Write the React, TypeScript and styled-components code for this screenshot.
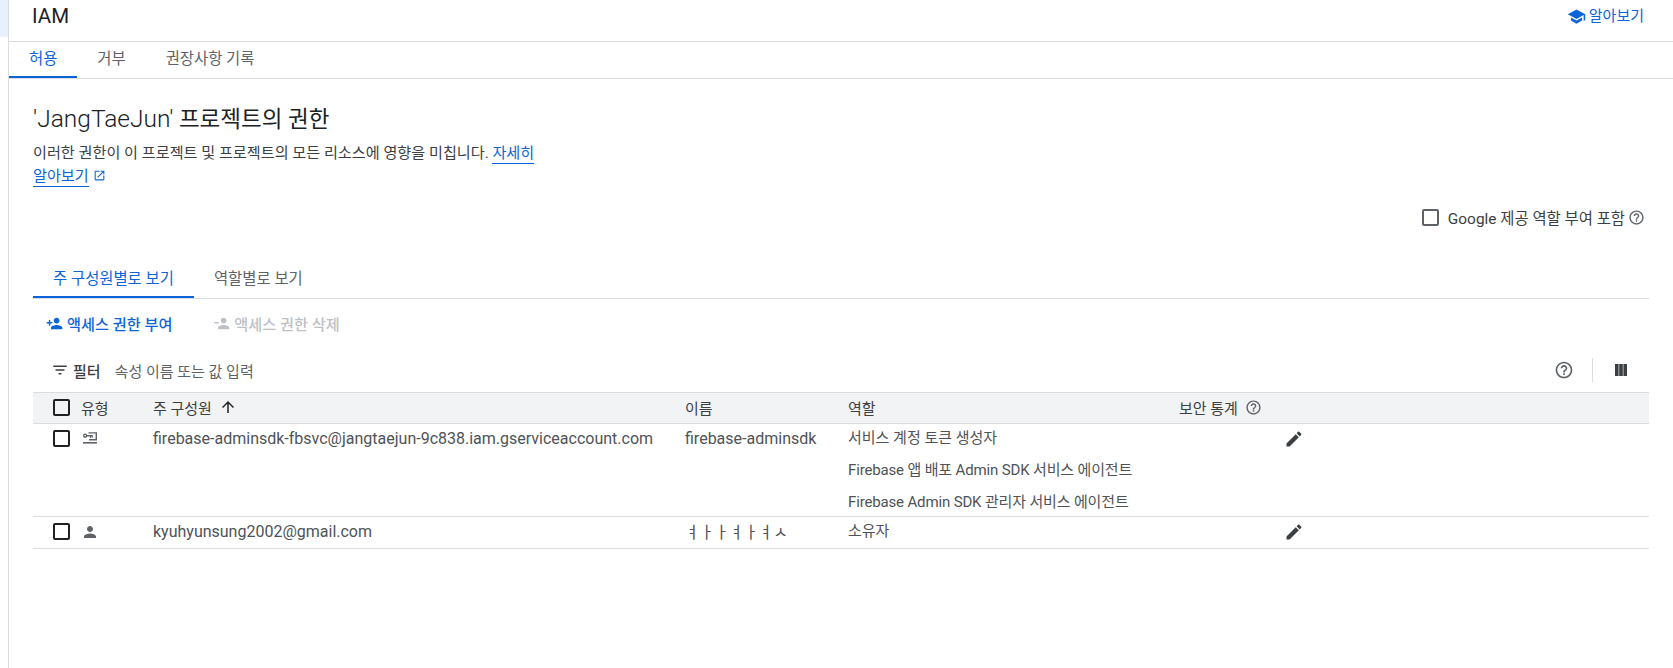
import React from "react";
import styled, { createGlobalStyle } from "styled-components";

const Global = createGlobalStyle`
  html, body { margin: 0; padding: 0; background: #fff; }
  body { font-family: Roboto, "Noto Sans CJK KR", sans-serif; color: #3c4043; font-size: 15px; }
  #root { height: 668px; overflow: hidden; }
`;

const Page = styled.div`display: flex; height: 668px;`;
const Rail = styled.div`width: 8px; flex: none; border-right: 1px solid #dadce0;`;
const RailMark = styled.div`height: 37px; background: #e8f0fe;`;
const Main = styled.main`flex: 1; min-width: 0; display: flex; flex-direction: column;`;

const Header = styled.header`
  height: 42px; box-sizing: border-box; border-bottom: 1px solid #dadce0;
  display: flex; align-items: flex-start; justify-content: space-between;
  padding: 0 29px 0 23px;
`;
const PageTitle = styled.h1`margin: 0; font-size: 20.5px; font-weight: 400; line-height: 33px; color: #202124;`;
const LearnLink = styled.a`
  display: flex; align-items: center; gap: 3px; color: #0b65d8; font-size: 15px; line-height: 32px; height: 32px;
`;

const Tabs = styled.nav`display: flex; height: 37px; box-sizing: border-box; border-bottom: 1px solid #dadce0;`;
const Tab = styled.div<{ $active?: boolean }>`
  height: 36px; box-sizing: border-box; padding: 0 20px; display: flex; align-items: center;
  font-size: 15.4px; line-height: 28px;
  color: ${p => (p.$active ? "#0b65d8" : "#5f6368")};
  border-bottom: 2px solid ${p => (p.$active ? "#0b65d8" : "transparent")};
`;

const Content = styled.div`padding: 0 24px; display: flex; flex-direction: column;`;
const Title = styled.h2`margin: 24px 0 0; font-size: 22.5px; line-height: 32px; font-weight: 400; color: #202124; white-space: nowrap;`;
const TitleName = styled.span`font-size: 24.5px; font-weight: 300;`;
const Desc = styled.p`margin: 7px 0 0; width: 505px; font-size: 15.15px; line-height: 23px; color: #3c4043; word-break: keep-all;`;
const DocLink = styled.a`color: #0b65d8; border-bottom: 1px solid #0b65d8; padding-bottom: 1px;`;
const ExtIcon = styled.svg`width: 13px; height: 13px; margin-left: 4px; vertical-align: -1px; fill: #0b65d8;`;

const IncludeRow = styled.div`
  display: flex; justify-content: flex-end; align-items: center; gap: 9px; margin-top: 17px; height: 24px; padding-right: 4px;
`;
const IncludeLabel = styled.span`display: flex; align-items: center; gap: 3px; color: #3c4043; font-size: 15.4px;`;
const Check = styled.span<{ $dark?: boolean }>`
  display: block; width: 17px; height: 17px; box-sizing: border-box; border-radius: 2px; flex: none;
  border: 2px solid ${p => (p.$dark ? "#202124" : "#5f6368")};
`;

const ViewTabs = styled.div`display: flex; margin-top: 33px; height: 37px; box-sizing: border-box; border-bottom: 1px solid #dadce0;`;

const ActionBar = styled.div`display: flex; align-items: center; height: 52px; box-sizing: border-box; padding: 0 0 4px 13px; gap: 41px;`;
const Action = styled.span<{ $off?: boolean }>`
  display: flex; align-items: center; gap: 4px; font-size: 15.2px; font-weight: 500;
  color: ${p => (p.$off ? "#bdc1c6" : "#0b65d8")};
`;

const FilterBar = styled.div`display: flex; align-items: center; height: 41px; box-sizing: border-box; padding: 0 0 3px 18px;`;
const FilterLabel = styled.span`display: flex; align-items: center; gap: 4px; font-weight: 500; color: #3c4043; font-size: 15px;`;
const FilterHint = styled.span`margin-left: 14px; color: #5f6368; font-size: 15px; flex: 1;`;
const FilterTools = styled.div`display: flex; align-items: center; padding-right: 22px;`;
const Divider = styled.span`width: 1px; height: 24px; background: #dadce0; margin: 0 22px 0 18px;`;

const Table = styled.div`display: flex; flex-direction: column; color: #4f5358; font-size: 15px;`;
const Row = styled.div<{ $head?: boolean }>`
  display: grid; grid-template-columns: 48px 72px 532px 163px 331px 1fr; box-sizing: border-box;
  min-height: 32px; align-items: start;
  border-bottom: 1px solid #dadce0;
  ${p => p.$head && "background: #f1f3f4; border-top: 1px solid #dadce0; color: #3c4043;"}
`;
const CheckCell = styled.div`padding-left: 20px; display: flex; align-items: center; height: 28px;`;
const TypeCell = styled.div`display: flex; align-items: center; height: 30px;`;
const Cell = styled.div`display: flex; align-items: center; gap: 7px; height: 28px; white-space: nowrap;`;
const DataCell = styled(Cell)`font-size: 16px;`;
const RoleList = styled.div`display: flex; flex-direction: column; gap: 4px;`;
const Role = styled.div<{ $tight?: boolean }>`
  line-height: 28px; height: 28px; white-space: nowrap;
  letter-spacing: ${p => (p.$tight ? "-0.15px" : "0")};
`;
const EditCell = styled.div`display: flex; align-items: center; height: 30px; padding-left: 105px;`;
const KeyIcon = styled.svg`display: block; width: 14px; height: 12px; margin-left: 2px; margin-top: -2px;`;
const ColumnsIcon = styled.svg`display: block; width: 12px; height: 12px; fill: #3c4043;`;

const P = {
  school: "M5 13.18v4L12 21l7-3.82v-4L12 17l-7-3.82zM12 3L1 9l11 6 9-4.91V17h2V9L12 3z",
  help: "M11 18h2v-2h-2v2zm1-16C6.48 2 2 6.48 2 12s4.48 10 10 10 10-4.48 10-10S17.52 2 12 2zm0 18c-4.41 0-8-3.59-8-8s3.59-8 8-8 8 3.59 8 8-3.59 8-8 8zm0-14c-2.21 0-4 1.79-4 4h2c0-1.1.9-2 2-2s2 .9 2 2c0 2-3 1.75-3 5h2c0-2.25 3-2.5 3-5 0-2.21-1.79-4-4-4z",
  ext: "M19 19H5V5h7V3H5c-1.11 0-2 .9-2 2v14c0 1.1.89 2 2 2h14c1.1 0 2-.9 2-2v-7h-2v7zM14 3v2h3.59l-9.83 9.83 1.41 1.41L19 6.41V10h2V3h-7z",
  add: "M15 12c2.21 0 4-1.79 4-4s-1.79-4-4-4-4 1.79-4 4 1.79 4 4 4zm-9-2V7H4v3H1v2h3v3h2v-3h3v-2H6zm9 4c-2.67 0-8 1.34-8 4v2h16v-2c0-2.66-5.33-4-8-4z",
  remove: "M15 12c2.21 0 4-1.79 4-4s-1.79-4-4-4-4 1.79-4 4 1.79 4 4 4zM2 10v2h6v-2H2zm13 4c-2.67 0-8 1.34-8 4v2h16v-2c0-2.66-5.33-4-8-4z",
  filter: "M10 18h4v-2h-4v2zM3 6v2h18V6H3zm3 7h12v-2H6v2z",
  up: "M4 12l1.41 1.41L11 7.83V20h2V7.83l5.58 5.59L20 12l-8-8-8 8z",
  person: "M12 12c2.21 0 4-1.79 4-4s-1.79-4-4-4-4 1.79-4 4 1.79 4 4 4zm0 2c-2.67 0-8 1.34-8 4v2h16v-2c0-2.66-5.33-4-8-4z",
  edit: "M3 17.25V21h3.75L17.81 9.94l-3.75-3.75L3 17.25zM20.71 7.04c.39-.39.39-1.02 0-1.41l-2.34-2.34c-.39-.39-1.02-.39-1.41 0l-1.83 1.83 3.75 3.75 1.83-1.83z",
};

const Icon = ({ d, size, color }: { d: string; size: number; color: string }) => (
  <svg width={size} height={size} viewBox="0 0 24 24" fill={color} style={{ flex: "none", display: "block" }}>
    <path d={d} />
  </svg>
);

const ServiceIcon = () => (
  <KeyIcon viewBox="0 0 14 12" fill="none">
    <circle cx="2.2" cy="3.6" r="1.5" stroke="#5f6368" strokeWidth="1.4" />
    <path d="M3.8 3h6v1.4h-6zM7 4.4h1.2v1.6H7zM9 4.4h1.2v1.2H9z" fill="#5f6368" />
    <path d="M5.5 0.2H14V8.4H6V7.1h6.6V1.5H5.5z" fill="#5f6368" />
    <path d="M0 10h14v1.6H0z" fill="#5f6368" />
  </KeyIcon>
);

export default function App() {
  return (
    <Page>
      <Global />
      <Rail><RailMark /></Rail>
      <Main>
        <Header>
          <PageTitle>IAM</PageTitle>
          <LearnLink><Icon d={P.school} size={19} color="#0b65d8" />알아보기</LearnLink>
        </Header>
        <Tabs>
          <Tab $active>허용</Tab>
          <Tab>거부</Tab>
          <Tab>권장사항 기록</Tab>
        </Tabs>
        <Content>
          <Title><TitleName>'JangTaeJun'</TitleName> 프로젝트의 권한</Title>
          <Desc>
            이러한 권한이 이 프로젝트 및 프로젝트의 모든 리소스에 영향을 미칩니다. <DocLink>자세히</DocLink> <DocLink>알아보기</DocLink>
            <ExtIcon viewBox="0 0 24 24"><path d={P.ext} /></ExtIcon>
          </Desc>
          <IncludeRow>
            <Check />
            <IncludeLabel>Google 제공 역할 부여 포함 <Icon d={P.help} size={17} color="#5f6368" /></IncludeLabel>
          </IncludeRow>
          <ViewTabs>
            <Tab $active>주 구성원별로 보기</Tab>
            <Tab>역할별로 보기</Tab>
          </ViewTabs>
          <ActionBar>
            <Action><Icon d={P.add} size={17} color="#0b65d8" />액세스 권한 부여</Action>
            <Action $off><Icon d={P.remove} size={17} color="#bdc1c6" />액세스 권한 삭제</Action>
          </ActionBar>
          <FilterBar>
            <FilterLabel><Icon d={P.filter} size={18} color="#3c4043" />필터</FilterLabel>
            <FilterHint>속성 이름 또는 값 입력</FilterHint>
            <FilterTools>
              <Icon d={P.help} size={20} color="#5f6368" />
              <Divider />
              <ColumnsIcon viewBox="0 0 12 12">
                <rect x="0" width="3.6" height="12" />
                <rect x="4.2" width="3.6" height="12" />
                <rect x="8.4" width="3.6" height="12" />
              </ColumnsIcon>
            </FilterTools>
          </FilterBar>
          <Table>
            <Row $head>
              <CheckCell><Check $dark /></CheckCell>
              <Cell>유형</Cell>
              <Cell>주 구성원 <Icon d={P.up} size={18} color="#202124" /></Cell>
              <Cell>이름</Cell>
              <Cell>역할</Cell>
              <Cell>보안 통계 <Icon d={P.help} size={17} color="#5f6368" /></Cell>
            </Row>
            <Row>
              <CheckCell><Check $dark /></CheckCell>
              <TypeCell><ServiceIcon /></TypeCell>
              <DataCell>firebase-adminsdk-fbsvc@jangtaejun-9c838.iam.gserviceaccount.com</DataCell>
              <DataCell>firebase-adminsdk</DataCell>
              <RoleList>
                <Role>서비스 계정 토큰 생성자</Role>
                <Role $tight>Firebase 앱 배포 Admin SDK 서비스 에이전트</Role>
                <Role $tight>Firebase Admin SDK 관리자 서비스 에이전트</Role>
              </RoleList>
              <EditCell><Icon d={P.edit} size={20} color="#3c4043" /></EditCell>
            </Row>
            <Row>
              <CheckCell><Check $dark /></CheckCell>
              <TypeCell><Icon d={P.person} size={18} color="#5f6368" /></TypeCell>
              <DataCell>kyuhyunsung2002@gmail.com</DataCell>
              <DataCell>ㅕㅏㅏㅕㅏㅕㅅ</DataCell>
              <RoleList><Role>소유자</Role></RoleList>
              <EditCell><Icon d={P.edit} size={20} color="#3c4043" /></EditCell>
            </Row>
          </Table>
        </Content>
      </Main>
    </Page>
  );
}
